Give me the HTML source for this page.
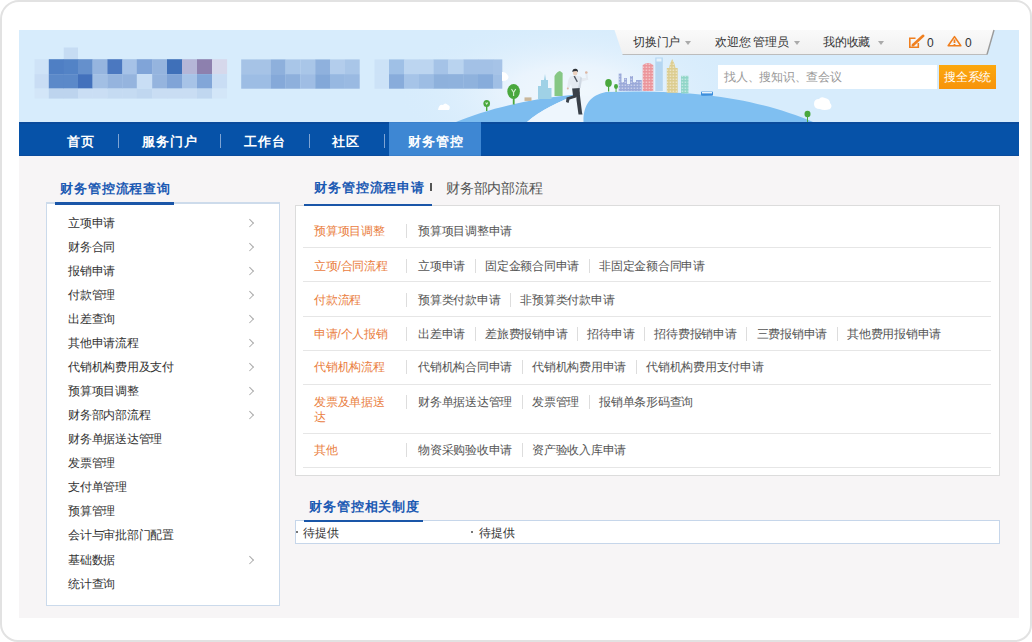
<!DOCTYPE html>
<html><head><meta charset="utf-8">
<style>
*{margin:0;padding:0;box-sizing:border-box}
html,body{width:1032px;height:642px;overflow:hidden;background:#fff}
body{position:relative;font-family:"Liberation Sans",sans-serif;font-size:12px;color:#333;letter-spacing:-0.25px}
#frame{position:absolute;left:0;top:0;width:1032px;height:642px;border:2px solid #e2e2e2;border-radius:19px 16px 17px 18px}
#banner{position:absolute;left:19px;top:30px;width:1000px;height:92px;background:#d7ecfc;overflow:hidden}
#nav{position:absolute;left:19px;top:122px;width:1000px;height:34px;background:#0652a8;border-top:2px solid #0a4b9c;border-bottom:1px solid #0a4b9c}
#content{position:absolute;left:19px;top:156px;width:1000px;height:462px;background:#f7f5f6}
.nv{position:absolute;letter-spacing:1.1px;top:123px;height:34px;line-height:38px;color:#fff;font-size:13px;font-weight:bold;white-space:nowrap}
.nsep{position:absolute;top:134px;width:1px;height:14px;background:#7ea4d4}
#navact{position:absolute;left:389px;top:122px;width:92px;height:34px;background:#3e87d3;border-top:1px solid #3a80cc;border-bottom:1px solid #3a7fca}
.ttl{position:absolute;letter-spacing:0.9px;font-size:13px;line-height:16px;font-weight:bold;color:#1c5ab3;white-space:nowrap}
.tab2{position:absolute;letter-spacing:-0.2px;font-size:14px;line-height:16px;color:#555;white-space:nowrap}
.tsep{position:absolute;width:2px;height:8px;background:#555}
.uline{position:absolute;background:#1a56a8}
#sidebox{position:absolute;left:46px;top:202px;width:234px;height:404px;background:#fff;border:1px solid #cbdaeb;border-top:2px solid #cddbeb}
.si{position:absolute;left:68px;font-size:12px;color:#333;white-space:nowrap;line-height:14px}
.arr{position:absolute;left:247px;width:5.5px;height:5.5px;margin-top:0.5px;border-right:1px solid #aaa;border-top:1px solid #aaa;transform:rotate(45deg)}
#tblbox{position:absolute;left:295px;top:205px;width:705px;height:271px;background:#fff;border:1px solid #dcdcdc}
.lab{position:absolute;left:314px;font-size:12px;line-height:14px;color:#ea8041;white-space:nowrap}
.vsep{position:absolute;left:406px;width:1px;height:14px;background:#ddd}
.links{position:absolute;left:418px;font-size:12px;line-height:14px;color:#555;white-space:nowrap}
.links span{display:inline-block;vertical-align:top}
.links i.ls{display:inline-block;vertical-align:top;width:1px;height:14px;background:#ddd;margin:0 9.5px}
.hl{position:absolute;left:303px;width:688px;height:1px;background:#e6e6e6}
#zdbox{position:absolute;left:295px;top:520px;width:705px;height:24px;background:#fff;border:1px solid #c6d6ea}
.dot{position:absolute;width:2px;height:2px;background:#777}
.zd{position:absolute;font-size:12px;line-height:14px;color:#333;white-space:nowrap}
.tb{position:absolute;top:35px;font-size:12px;line-height:14px;color:#333;white-space:nowrap}
.tbn{position:absolute;top:36px;font-size:12px;line-height:14px;color:#333}
.tri{position:absolute;top:41px;width:0;height:0;border-left:3.5px solid transparent;border-right:3.5px solid transparent;border-top:4px solid #aaa}
.ico{position:absolute}
#sinput{position:absolute;left:718px;top:65px;width:219px;height:24px;background:#fff;color:#999;font-size:12px;line-height:24px;padding-left:6px;white-space:nowrap}
#sbtn{position:absolute;left:939px;top:65px;width:57px;height:24px;line-height:25px !important;background:linear-gradient(#fca80e,#f7930a);color:#fff;font-size:12px;line-height:24px;text-align:center;white-space:nowrap}

</style></head><body>
<div id="frame"></div>
<svg id="banner" width="1000" height="92" viewBox="19 30 1000 92">
<defs>
<radialGradient id="glow" cx="0" cy="0" r="1" gradientUnits="userSpaceOnUse" gradientTransform="translate(572,92) scale(175,75)">
<stop offset="0" stop-color="#f1f8fd"/><stop offset="0.35" stop-color="#eaf4fd"/><stop offset="1" stop-color="#d7ecfc" stop-opacity="0"/>
</radialGradient>
<pattern id="win" x="0" y="0" width="3" height="3" patternUnits="userSpaceOnUse"><rect x="0.6" y="0.6" width="1.6" height="1.2" fill="#fff" fill-opacity="0.55"/></pattern>
<linearGradient id="bar" x1="0" y1="0" x2="0" y2="1">
<stop offset="0" stop-color="#fbfbfb"/><stop offset="1" stop-color="#f1f1f1"/>
</linearGradient>
</defs>
<rect x="19" y="30" width="1000" height="92" fill="#d7ecfc"/>
<rect x="380" y="30" width="400" height="92" fill="url(#glow)"/>
<rect x="63.7" y="47.5" width="14.3" height="11.7" fill="#c6dcf3"/>
<rect x="34.5" y="59.2" width="14.599999999999998" height="14.9" fill="#cfe3f7"/>
<rect x="34.5" y="74.1" width="14.599999999999998" height="14.5" fill="#c9ddf4"/>
<rect x="34.5" y="88.6" width="14.599999999999998" height="10" fill="#d3e6f8"/>
<rect x="48.8" y="59.2" width="15.200000000000006" height="14.9" fill="#4f7fc4"/>
<rect x="48.8" y="74.1" width="15.200000000000006" height="14.5" fill="#5b89c9"/>
<rect x="48.8" y="88.6" width="15.200000000000006" height="10" fill="#bdd4ee"/>
<rect x="63.7" y="59.2" width="14.599999999999998" height="14.9" fill="#5383c6"/>
<rect x="63.7" y="74.1" width="14.599999999999998" height="14.5" fill="#5b89c9"/>
<rect x="63.7" y="88.6" width="14.599999999999998" height="10" fill="#bdd4ee"/>
<rect x="78" y="59.2" width="14.8" height="14.9" fill="#6590cc"/>
<rect x="78" y="74.1" width="14.8" height="14.5" fill="#4371bc"/>
<rect x="78" y="88.6" width="14.8" height="10" fill="#cadef4"/>
<rect x="92.5" y="59.2" width="15.200000000000006" height="14.9" fill="#96b5df"/>
<rect x="92.5" y="74.1" width="15.200000000000006" height="14.5" fill="#a2bfe4"/>
<rect x="92.5" y="88.6" width="15.200000000000006" height="10" fill="#cadef4"/>
<rect x="107.4" y="59.2" width="15.199999999999992" height="14.9" fill="#4b78c0"/>
<rect x="107.4" y="74.1" width="15.199999999999992" height="14.5" fill="#95b4de"/>
<rect x="107.4" y="88.6" width="15.199999999999992" height="10" fill="#c5dbf2"/>
<rect x="122.3" y="59.2" width="14.800000000000015" height="14.9" fill="#a6c2e7"/>
<rect x="122.3" y="74.1" width="14.800000000000015" height="14.5" fill="#95b4de"/>
<rect x="122.3" y="88.6" width="14.800000000000015" height="10" fill="#c5dbf2"/>
<rect x="136.8" y="59.2" width="15.699999999999978" height="14.9" fill="#80a4d8"/>
<rect x="136.8" y="74.1" width="15.699999999999978" height="14.5" fill="#c9def5"/>
<rect x="136.8" y="88.6" width="15.699999999999978" height="10" fill="#c0d7f0"/>
<rect x="152.2" y="59.2" width="15.100000000000012" height="14.9" fill="#95b4de"/>
<rect x="152.2" y="74.1" width="15.100000000000012" height="14.5" fill="#95b4de"/>
<rect x="152.2" y="88.6" width="15.100000000000012" height="10" fill="#c9ddf3"/>
<rect x="167" y="59.2" width="15.3" height="14.9" fill="#3f70b9"/>
<rect x="167" y="74.1" width="15.3" height="14.5" fill="#80a4d7"/>
<rect x="167" y="88.6" width="15.3" height="10" fill="#c9ddf3"/>
<rect x="182" y="59.2" width="15.3" height="14.9" fill="#b5b6d7"/>
<rect x="182" y="74.1" width="15.3" height="14.5" fill="#a7c3e7"/>
<rect x="182" y="88.6" width="15.3" height="10" fill="#c9ddf3"/>
<rect x="197" y="59.2" width="15.3" height="14.9" fill="#8d80ae"/>
<rect x="197" y="74.1" width="15.3" height="14.5" fill="#82a6d8"/>
<rect x="197" y="88.6" width="15.3" height="10" fill="#c0d7f0"/>
<rect x="212" y="59.2" width="15.100000000000012" height="14.9" fill="#d6d8eb"/>
<rect x="212" y="74.1" width="15.100000000000012" height="14.5" fill="#c9ddf4"/>
<rect x="212" y="88.6" width="15.100000000000012" height="10" fill="#d3e6f8"/>
<rect x="241.2" y="59.4" width="14.9" height="14.7" fill="#a6c3e6"/>
<rect x="241.2" y="74.1" width="14.9" height="14.6" fill="#9dbde4"/>
<rect x="256.0" y="59.4" width="14.9" height="14.7" fill="#a6c3e6"/>
<rect x="256.0" y="74.1" width="14.9" height="14.6" fill="#9dbde4"/>
<rect x="270.8" y="59.4" width="14.9" height="14.7" fill="#8eb0dc"/>
<rect x="270.8" y="74.1" width="14.9" height="14.6" fill="#85a9d9"/>
<rect x="285.6" y="59.4" width="14.9" height="14.7" fill="#a9c6e8"/>
<rect x="285.6" y="74.1" width="14.9" height="14.6" fill="#8eb0dc"/>
<rect x="300.4" y="59.4" width="14.9" height="14.7" fill="#a9c6e8"/>
<rect x="300.4" y="74.1" width="14.9" height="14.6" fill="#9fbde4"/>
<rect x="315.2" y="59.4" width="14.9" height="14.7" fill="#8fb1dd"/>
<rect x="315.2" y="74.1" width="14.9" height="14.6" fill="#83a8d8"/>
<rect x="330.0" y="59.4" width="14.9" height="14.7" fill="#b3cdec"/>
<rect x="330.0" y="74.1" width="14.9" height="14.6" fill="#97b8e1"/>
<rect x="344.8" y="59.4" width="14.9" height="14.7" fill="#a9c6e8"/>
<rect x="344.8" y="74.1" width="14.9" height="14.6" fill="#9abae2"/>
<rect x="374.5" y="59.4" width="14.8" height="14.7" fill="#cce2f7"/>
<rect x="374.5" y="74.1" width="14.8" height="14.6" fill="#cce2f7"/>
<rect x="389" y="59.4" width="15.3" height="14.7" fill="#9fc0e6"/>
<rect x="389" y="74.1" width="15.3" height="14.6" fill="#88acdb"/>
<rect x="404" y="59.4" width="15.3" height="14.7" fill="#bcd5f0"/>
<rect x="404" y="74.1" width="15.3" height="14.6" fill="#a6c4e8"/>
<rect x="419" y="59.4" width="14.8" height="14.7" fill="#bcd5f0"/>
<rect x="419" y="74.1" width="14.8" height="14.6" fill="#9dbde4"/>
<rect x="433.5" y="59.4" width="14.8" height="14.7" fill="#a5c3e7"/>
<rect x="433.5" y="74.1" width="14.8" height="14.6" fill="#8eb1dc"/>
<rect x="448" y="59.4" width="15.8" height="14.7" fill="#b9d3ef"/>
<rect x="448" y="74.1" width="15.8" height="14.6" fill="#8fb2dd"/>
<rect x="463.5" y="59.4" width="14.8" height="14.7" fill="#a3c1e6"/>
<rect x="463.5" y="74.1" width="14.8" height="14.6" fill="#8fb2dd"/>
<rect x="478" y="59.4" width="15.3" height="14.7" fill="#a3c1e6"/>
<rect x="478" y="74.1" width="15.3" height="14.6" fill="#87acdb"/>
<rect x="493" y="59.4" width="9.3" height="14.7" fill="#a6c3e7"/>
<rect x="493" y="74.1" width="9.3" height="14.6" fill="#a0bfe5"/>
<!-- clouds -->
<path d="M438,110 q1,-6 5,-5 q2,-3 5,0 q3,1 1,5 z" fill="#fff"/>
<path d="M502,81 L502,72 q4,0 5.5,3 q2,2 0,4.5 q-1.5,1.5 -5.5,1.5 z" fill="#fff"/>
<path d="M814,104 q0,-5 5,-5 q2,-3 6,-1 q5,1 5,5 q3,3 0,6 q-6,2 -10,0 q-6,0 -6,-5 z" fill="#fff"/>
<!-- left hill band -->
<path d="M456,122 C485,110 525,99 576,94.5 C560,102 540,110 527,122 Z" fill="#7cbcef"/>
<!-- road light -->
<path d="M527,122 C540,110 560,102 576,94.5 L590,96 C586,104 584,112 584,122 Z" fill="#eef6fd"/>
<!-- right hill -->
<path d="M583.5,122 C583,106 590,95 606,92 C640,90.5 680,92 705,95 C750,100 785,110 813,122 Z" fill="#7fbff1"/>
<!-- buildings left -->
<rect x="524.5" y="97.4" width="7" height="3.5" fill="#c9b79b"/>
<path d="M538,99 L538,86 L541,86 L541,80 L544,80 L545,74 L546,80 L548,80 L548,88 L551.5,88 L551.5,99 Z" fill="#9fd1e6"/>
<path d="M554.5,96 L554.5,76 Q557,71.5 560,71 L562.6,73 L562.6,96 Z" fill="#86c784"/>
<!-- trees -->
<g fill="#4aa83e">
<ellipse cx="486.7" cy="103.5" rx="3.3" ry="3.5"/><rect x="486" y="104" width="1.4" height="7"/>
<ellipse cx="513.6" cy="91.5" rx="6.3" ry="7.5"/><rect x="512.8" y="96" width="1.8" height="8.5"/>
<ellipse cx="608.5" cy="83" rx="3.3" ry="4"/><rect x="608" y="84" width="1.2" height="7.5"/>
<ellipse cx="616" cy="86.5" rx="2" ry="2.4"/><rect x="615.6" y="87" width="0.9" height="5"/>
<ellipse cx="807.5" cy="114" rx="3" ry="3.3"/><rect x="807" y="115" width="1" height="7"/>
</g>
<g stroke="#d8efd5" stroke-width="1.1" fill="none"><path d="M511.5,89 L513.6,92.5 L515.7,89 M513.6,92.5 L513.6,96"/><path d="M485.6,102.5 L486.7,104 L487.8,102.5"/></g>
<!-- buildings right -->
<path d="M618.7,91 L618.7,73.5 L621.5,73.5 L621.5,82 L624,82 L624,78 L627,78 L627,84 L630,84 L630,76 L633,76 L633,82 L636,82 L636,80 L641.7,80 L641.7,91 Z" fill="#9aa9d9"/>
<path d="M618.7,91 L618.7,73.5 L621.5,73.5 L621.5,82 L624,82 L624,78 L627,78 L627,84 L630,84 L630,76 L633,76 L633,82 L636,82 L636,80 L641.7,80 L641.7,91 Z" fill="url(#win)"/>
<path d="M642.7,91 L642.7,65 Q648,61 653.3,65 L653.3,91 Z" fill="#eb959b"/>
<path d="M642.7,91 L642.7,65 Q648,61 653.3,65 L653.3,91 Z" fill="url(#win)"/>
<rect x="655.3" y="57.5" width="7.5" height="33.5" fill="#b5d6f1"/>
<rect x="656.5" y="58.5" width="5" height="3" fill="#e6f2fb"/>
<path d="M666.8,92.7 L666.8,68 L669,68 L670,64 L672.2,59 L674.5,64 L675.5,68 L677.7,68 L677.7,92.7 Z" fill="#dccd90"/>
<path d="M666.8,92.7 L666.8,68 L669,68 L670,64 L672.2,59 L674.5,64 L675.5,68 L677.7,68 L677.7,92.7 Z" fill="url(#win)"/>
<rect x="681" y="75.8" width="7.5" height="17.6" fill="#90d5c8"/>
<rect x="681" y="75.8" width="7.5" height="17.6" fill="url(#win)"/>
<rect x="701" y="91.5" width="12" height="4.3" rx="1" fill="#3c8edc"/>
<rect x="702" y="91.8" width="10" height="1.6" fill="#e8f3fc"/>
<!-- runner -->
<g>
<path d="M576,91 L579.5,91.5 L580.5,100 L582,112.5 L582.5,114.5 L578.5,114.5 L578,111 L576.5,100 Z" fill="#394049"/>
<path d="M572,87.5 L579.8,87.5 L579.5,94 L576,97.5 L569.5,99.5 L568.5,103 L566,102 L566.5,97.5 L573,95.5 Z" fill="#394049"/>
<path d="M570,76.5 L575,75.5 L580.5,76.5 L582,78 L586,78 L585.3,73 L587.3,72.8 L588.3,79.8 L582,81.5 L580.5,88 L572,88.5 L571,84 L568.8,88.8 L567,88.3 L568.3,80 Z" fill="#e4eaf1"/>
<path d="M580.5,76.5 L582,78 L581,84 L580.5,88 L578,88 Z" fill="#cfd8e2"/>
<path d="M573.5,76.3 L575,76 L577.8,81.5 L576.8,82.3 Z" fill="#4d5561"/>
<ellipse cx="575.2" cy="72.8" rx="2.3" ry="2.6" fill="#ecd2c0"/>
<path d="M572.3,72 Q572.5,68.6 575.5,68.8 Q578.3,69 578,72 L576.5,71 L574,71.3 Z" fill="#2f3238"/>
<circle cx="586.3" cy="72.5" r="1.3" fill="#dcb6a2"/>
<circle cx="567.8" cy="88.6" r="1" fill="#dcb6a2"/>
</g>
</svg>
<!-- top bar -->
<svg style="position:absolute;left:0;top:0" width="1032" height="60" viewBox="0 0 1032 60">
<path d="M614.5,30 L994,30 L987,54 L622.5,54 Z" fill="url(#bar2)"/>
<defs><linearGradient id="bar2" x1="0" y1="0" x2="0" y2="1"><stop offset="0" stop-color="#fafafa"/><stop offset="1" stop-color="#f0f0f0"/></linearGradient></defs>
<path d="M622.5,54.5 L987,54.5" stroke="#bcbcbc" stroke-width="1.2"/>
<path d="M994,30 L987,54.5" stroke="#9a9a9a" stroke-width="1.4"/>
</svg>
<div class="tb" style="left:633px">切换门户</div><i class="tri" style="left:685px"></i>
<div class="tb" style="left:715px">欢迎您 管理员</div><i class="tri" style="left:794px"></i>
<div class="tb" style="left:823px">我的收藏</div><i class="tri" style="left:878px"></i>
<svg class="ico" style="left:900px;top:30px" width="70" height="24" viewBox="900 30 70 24">
<path d="M915.5,38.2 H909.8 V47.3 H918.3 V43" fill="none" stroke="#f07f1e" stroke-width="1.6"/>
<path d="M912.8,45.2 L923.2,35.8" stroke="#f07f1e" stroke-width="2.6" stroke-linecap="round"/>
<path d="M912,46 L912.6,43.6 L914.4,45.4 Z" fill="#f07f1e"/>
<path d="M954.5,36.6 L960.8,45.8 H948.2 Z" fill="none" stroke="#f07f1e" stroke-width="1.6" stroke-linejoin="round"/>
<path d="M954.5,39.5 V43" stroke="#f07f1e" stroke-width="1.8"/>
<rect x="953.6" y="44" width="1.8" height="1.4" fill="#f07f1e"/>
</svg>
<div class="tbn" style="left:927px">0</div>

<div class="tbn" style="left:965px">0</div>
<div id="sinput">找人、搜知识、查会议</div>
<div id="sbtn">搜全系统</div>

<div id="nav"></div>
<div class="nv" style="left:67px">首页</div>
<div class="nsep" style="left:118px"></div>
<div class="nv" style="left:142px">服务门户</div>
<div class="nsep" style="left:220px"></div>
<div class="nv" style="left:244px">工作台</div>
<div class="nsep" style="left:309px"></div>
<div class="nv" style="left:332px">社区</div>
<div class="nsep" style="left:384px"></div>
<div id="navact"></div>
<div class="nv" style="left:408px">财务管控</div>
<div id="content"></div>
<div class="ttl" style="left:60px;top:181px">财务管控流程查询</div>
<div id="sidebox"></div>
<div class="uline" style="left:55px;top:202px;width:119px;height:3px"></div>
<div class="si" style="top:215.5px">立项申请</div>
<div class="arr" style="top:219.0px"></div>
<div class="si" style="top:239.6px">财务合同</div>
<div class="arr" style="top:243.1px"></div>
<div class="si" style="top:263.6px">报销申请</div>
<div class="arr" style="top:267.1px"></div>
<div class="si" style="top:287.7px">付款管理</div>
<div class="arr" style="top:291.2px"></div>
<div class="si" style="top:311.8px">出差查询</div>
<div class="arr" style="top:315.3px"></div>
<div class="si" style="top:335.9px">其他申请流程</div>
<div class="arr" style="top:339.4px"></div>
<div class="si" style="top:359.9px">代销机构费用及支付</div>
<div class="arr" style="top:363.4px"></div>
<div class="si" style="top:384.0px">预算项目调整</div>
<div class="arr" style="top:387.5px"></div>
<div class="si" style="top:408.1px">财务部内部流程</div>
<div class="arr" style="top:411.6px"></div>
<div class="si" style="top:432.1px">财务单据送达管理</div>
<div class="si" style="top:456.2px">发票管理</div>
<div class="si" style="top:480.3px">支付单管理</div>
<div class="si" style="top:504.3px">预算管理</div>
<div class="si" style="top:528.4px">会计与审批部门配置</div>
<div class="si" style="top:552.5px">基础数据</div>
<div class="arr" style="top:556.0px"></div>
<div class="si" style="top:576.5px">统计查询</div>
<div class="ttl" style="left:314px;top:180px">财务管控流程申请</div>
<div class="tsep" style="left:430px;top:183px"></div>
<div class="tab2" style="left:446px;top:180px">财务部内部流程</div>
<div id="tblbox"></div>
<div class="uline" style="left:304px;top:204px;width:128px;height:2px"></div>
<div class="lab" style="top:223.5px">预算项目调整</div>
<div class="vsep" style="top:223.5px"></div>
<div class="links" style="top:223.5px"><span>预算项目调整申请</span></div>
<div class="lab" style="top:258.5px">立项/合同流程</div>
<div class="vsep" style="top:258.5px"></div>
<div class="links" style="top:258.5px"><span>立项申请</span><i class="ls"></i><span>固定金额合同申请</span><i class="ls"></i><span>非固定金额合同申请</span></div>
<div class="lab" style="top:292.5px">付款流程</div>
<div class="vsep" style="top:292.5px"></div>
<div class="links" style="top:292.5px"><span>预算类付款申请</span><i class="ls"></i><span>非预算类付款申请</span></div>
<div class="lab" style="top:326.6px">申请/个人报销</div>
<div class="vsep" style="top:326.6px"></div>
<div class="links" style="top:326.6px"><span>出差申请</span><i class="ls"></i><span>差旅费报销申请</span><i class="ls"></i><span>招待申请</span><i class="ls"></i><span>招待费报销申请</span><i class="ls"></i><span>三费报销申请</span><i class="ls"></i><span>其他费用报销申请</span></div>
<div class="lab" style="top:360.2px">代销机构流程</div>
<div class="vsep" style="top:360.2px"></div>
<div class="links" style="top:360.2px"><span>代销机构合同申请</span><i class="ls"></i><span>代销机构费用申请</span><i class="ls"></i><span>代销机构费用支付申请</span></div>
<div class="lab" style="top:394.6px">发票及单据送</div>
<div class="lab" style="top:409.6px">达</div>
<div class="vsep" style="top:394.6px"></div>
<div class="links" style="top:394.6px"><span>财务单据送达管理</span><i class="ls"></i><span>发票管理</span><i class="ls"></i><span>报销单条形码查询</span></div>
<div class="lab" style="top:443.0px">其他</div>
<div class="vsep" style="top:443.0px"></div>
<div class="links" style="top:443.0px"><span>物资采购验收申请</span><i class="ls"></i><span>资产验收入库申请</span></div>
<div class="hl" style="top:247px"></div>
<div class="hl" style="top:281px"></div>
<div class="hl" style="top:316px"></div>
<div class="hl" style="top:350px"></div>
<div class="hl" style="top:384px"></div>
<div class="hl" style="top:433px"></div>
<div class="hl" style="top:467px"></div>
<div class="ttl" style="left:309px;top:499px">财务管控相关制度</div>
<div id="zdbox"></div>
<div class="uline" style="left:304px;top:520px;width:119px;height:2px"></div>
<div class="dot" style="left:296px;top:531px"></div>
<div class="zd" style="left:303px;top:526px">待提供</div>
<div class="dot" style="left:471px;top:531px"></div>
<div class="zd" style="left:479px;top:526px">待提供</div>
</body></html>
